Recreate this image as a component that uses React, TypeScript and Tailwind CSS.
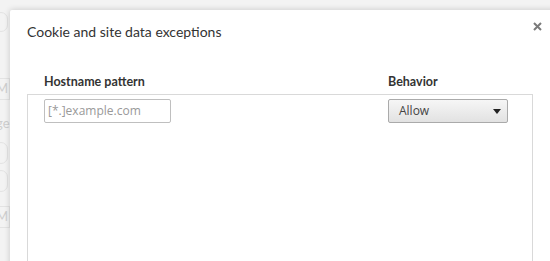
import React from "react";

export default function App() {
  return (
    <div className="relative w-[550px] h-[261px] overflow-hidden bg-[#f3f3f3]" style={{ fontFamily: "'Lato', 'Open Sans', sans-serif" }}>
      {/* faint page behind the overlay */}
      <div className="flex flex-col pt-[12px] opacity-40 text-[13px] text-[#999]">
        <div className="w-[14px] h-[20px] rounded-full border border-[#ccc] -ml-[6px]" />
        <div className="mt-[46px] w-[20px] h-[22px] border border-[#ccc] -ml-[10px] flex items-center justify-end pr-[1px]">M</div>
        <div className="mt-[14px] -ml-[4px]">ge</div>
        <div className="mt-[8px] w-[14px] h-[22px] rounded-full border border-[#ccc] -ml-[6px]" />
        <div className="mt-[6px] w-[14px] h-[22px] rounded-full border border-[#ccc] -ml-[6px]" />
        <div className="mt-[14px] w-[20px] h-[22px] border border-[#ccc] -ml-[10px] flex items-center justify-end pr-[1px]">M</div>
      </div>

      <div className="absolute left-[10px] top-[10px] w-[560px] h-[300px] bg-white rounded-tl-[2px] shadow-[0_0_6px_rgba(0,0,0,0.18)]">
        <button className="absolute left-[521px] top-[10px] w-[12px] h-[12px] flex items-center justify-center">
          <svg width="9" height="9" viewBox="0 0 9 9">
            <path d="M1 1 L8 8 M8 1 L1 8" stroke="#7a7a7a" strokeWidth="2" />
          </svg>
        </button>
        <div className="pl-[17px] pt-[12px] text-[14px] text-[#333] leading-[20px]">Cookie and site data exceptions</div>
        <div className="ml-[17px] mt-[32px] w-[506px]">
          <div className="flex text-[12.5px] font-bold text-[#333] leading-[16px] pl-[17px]">
            <div className="w-[344px]">Hostname pattern</div>
            <div>Behavior</div>
          </div>
          <div className="mt-[4px] h-[200px] border border-[#d9d9d9] pl-[16px] pt-[4px] flex">
            <div className="w-[127px] h-[24px] border border-[#bfbfbf] rounded-[2px] flex items-center pl-[3px] text-[12px] text-[#999]" style={{ fontFamily: "'Open Sans', sans-serif" }}>[*.]example.com</div>
            <div className="ml-[217px] w-[120px] h-[24px] border border-[#aaa] rounded-[2px] bg-gradient-to-b from-[#f6f6f6] to-[#e2e2e2] flex items-center justify-between pl-[10px] pr-[6px] text-[12px] text-[#444]" style={{ fontFamily: "'Open Sans', sans-serif" }}>
              <span>Allow</span>
              <svg width="8" height="5" viewBox="0 0 8 5"><path d="M0 0 L8 0 L4 5 Z" fill="#222" /></svg>
            </div>
          </div>
        </div>
      </div>
    </div>
  );
}
